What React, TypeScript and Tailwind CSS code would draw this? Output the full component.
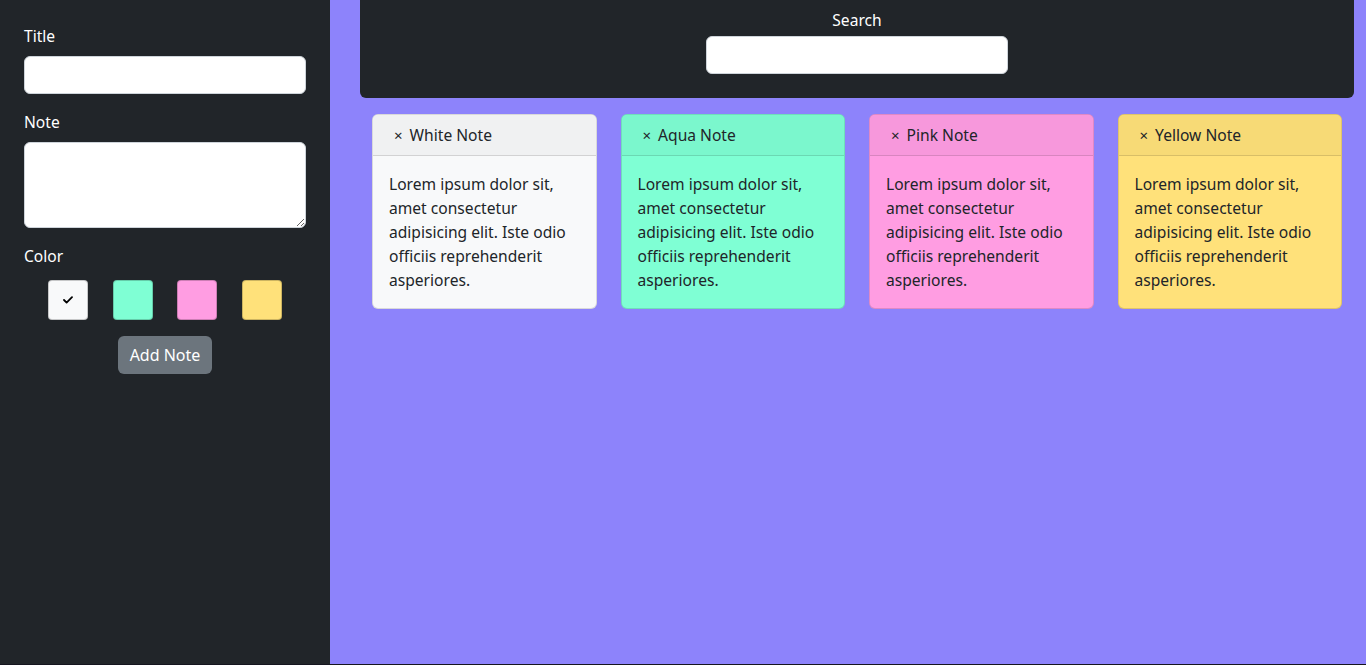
import React from 'react';

const NOTES = [
    { title: 'White Note', body: 'bg-[#f8f9fa]', head: 'bg-[#f0f1f2]' },
    { title: 'Aqua Note', body: 'bg-[#7fffd4]', head: 'bg-[#7bf7cd]' },
    { title: 'Pink Note', body: 'bg-[#ff9de2]', head: 'bg-[#f798dc]' },
    { title: 'Yellow Note', body: 'bg-[#ffe17a]', head: 'bg-[#f7da76]' },
] as const;

const SWATCHES = ['bg-[#f8f9fa]', 'bg-[#7fffd4]', 'bg-[#ff9de2]', 'bg-[#ffe17a]'] as const;

const LOREM = 'Lorem ipsum dolor sit, amet consectetur adipisicing elit. Iste odio officiis reprehenderit asperiores.';

const CheckMark: React.FC = () => (
    <svg width="10" height="8" viewBox="0 0 10 8" fill="none">
        <path d="M1 4l2.6 2.6L9 1.2" stroke="#000" strokeWidth="1.8" strokeLinecap="round" strokeLinejoin="round" />
    </svg>
);

const Sidebar: React.FC = () => (
    <aside className="w-[330px] shrink-0 bg-[#212529] px-6 pt-6 text-white">
        <label className="mb-2 block leading-6">Title</label>
        <input className="mb-4 block h-[38px] w-full rounded-md border border-[#ced4da] bg-white" />

        <label className="mb-2 block leading-6">Note</label>
        <textarea rows={3} className="mb-4 block h-[86px] w-full rounded-md border border-[#ced4da] bg-white" />

        <label className="mb-3 block leading-6">Color</label>
        <div className="flex justify-evenly">
            {SWATCHES.map((c, i) => (
                <button
                    key={c}
                    className={`flex h-10 w-10 items-center justify-center rounded border border-black/20 ${c}`}
                >
                    {i === 0 && <CheckMark />}
                </button>
            ))}
        </div>

        <div className="mt-4 flex justify-center">
            <button className="h-[38px] rounded-md bg-[#6c757d] px-3 text-[16px] leading-6 text-white">Add Note</button>
        </div>
    </aside>
);

const NoteCard: React.FC<{ note: (typeof NOTES)[number] }> = ({ note }) => (
    <div className={`overflow-hidden rounded-md border border-black/[0.125] text-[#212529] ${note.body}`}>
        <div className={`flex h-[41px] items-center border-b border-black/[0.125] px-4 ${note.head}`}>
            <span className="ml-[5px] mr-[7px] text-[15px] leading-none">×</span>
            <span className="leading-6">{note.title}</span>
        </div>
        <p className="p-4 leading-6">{LOREM}</p>
    </div>
);

export default function App() {
    return (
        <div className="h-[665px] bg-[#15151f]" style={{ fontFamily: '"Segoe UI", "Noto Sans", sans-serif' }}>
            <div className="flex h-[664px] text-[15.6px]">
                <Sidebar />
                <main className="flex-1 bg-[#8d83fb] pl-[30px] pr-3">
                    <header className="flex flex-col items-center rounded-b-md bg-[#212529] pb-6 pt-2 text-white">
                        <label className="mb-1 leading-6">Search</label>
                        <input className="h-[38px] w-[302px] rounded-md border border-[#ced4da] bg-white" />
                    </header>
                    <div className="mt-4 grid grid-cols-4 items-start gap-6 px-3">
                        {NOTES.map((n) => (
                            <NoteCard key={n.title} note={n} />
                        ))}
                    </div>
                </main>
            </div>
        </div>
    );
}
